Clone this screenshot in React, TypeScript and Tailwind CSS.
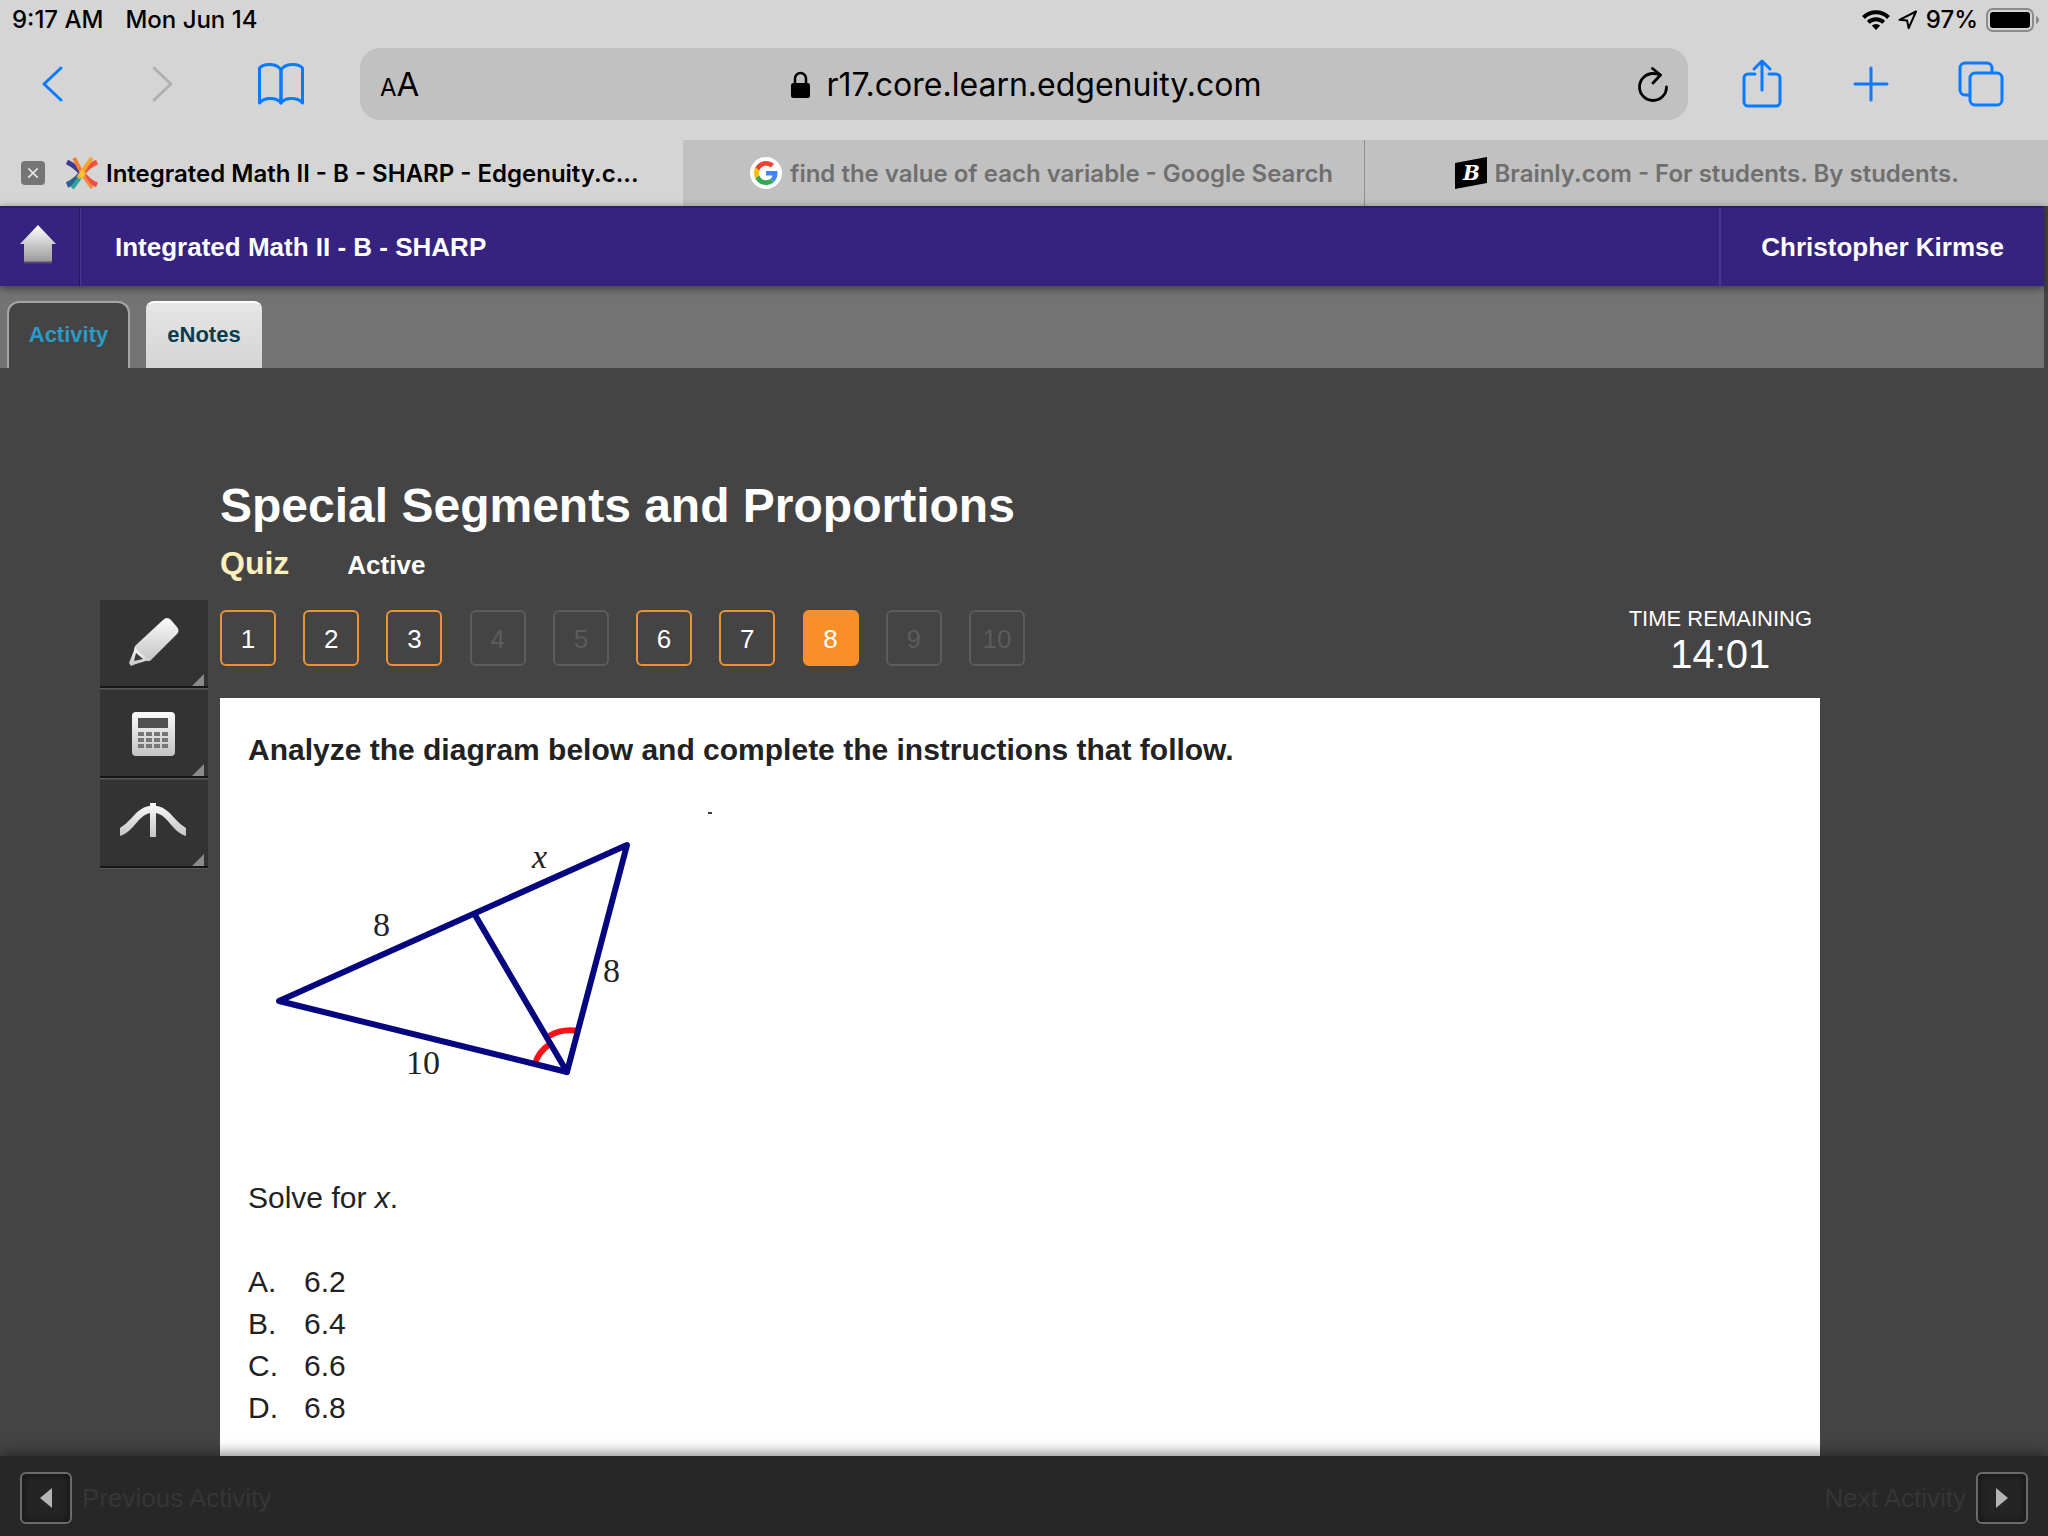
import React from "react";

const tools = ["Highlighter", "Calculator", "Graphing tool"];

const questions = [
  { number: 1, state: "done" },
  { number: 2, state: "done" },
  { number: 3, state: "done" },
  { number: 4, state: "locked" },
  { number: 5, state: "locked" },
  { number: 6, state: "done" },
  { number: 7, state: "done" },
  { number: 8, state: "current" },
  { number: 9, state: "locked" },
  { number: 10, state: "locked" },
];

const options = [
  { letter: "A.", value: "6.2" },
  { letter: "B.", value: "6.4" },
  { letter: "C.", value: "6.6" },
  { letter: "D.", value: "6.8" },
];

const questionStyles: Record<string, string> = {
  done: "border-[#e8923c] text-white",
  locked: "border-[#5c5c5c] text-[#5c5c5c]",
  current: "border-[#f89027] bg-[#f89027] text-white",
};

function StatusBar() {
  return (
    <div className="flex h-10 items-center justify-between pl-3 pr-2 text-[24px] font-medium">
      <div className="flex gap-[22px]">
        <span>9:17 AM</span>
        <span>Mon Jun 14</span>
      </div>
      <div className="flex items-center gap-2">
        <svg width="28" height="20" viewBox="0 0 28 20" fill="none" stroke="black" strokeWidth="4">
          <path d="M1.5 7.5a17.7 17.7 0 0 1 25 0" />
          <path d="M6.3 12.4a11 11 0 0 1 15.4 0" />
          <path d="M14 20l-4.2-4.4a6 6 0 0 1 8.4 0z" fill="black" stroke="none" />
        </svg>
        <svg width="20" height="20" viewBox="0 0 20 20" fill="none" stroke="black" strokeWidth="2" strokeLinejoin="round">
          <path d="M18 1.5L1.5 9.8l7.600.8 1.600 7.600z" />
        </svg>
        <span>97%</span>
        <svg width="54" height="24" viewBox="0 0 54 24">
          <rect x="1" y="1" width="46" height="22" rx="6" fill="none" stroke="#8b8b8b" strokeWidth="2" />
          <rect x="4" y="4" width="40" height="16" rx="3" fill="black" />
          <path d="M50 8c4 1.500 4 6.500 0 8z" fill="#8b8b8b" />
        </svg>
      </div>
    </div>
  );
}

function Toolbar() {
  return (
    <div className="flex h-[100px] items-start pt-2">
      <div className="flex h-[72px] w-[360px] items-center pl-[40px]">
        <button aria-label="Back">
          <svg width="24" height="40" viewBox="0 0 24 40" fill="none" stroke="#0a7aff" strokeWidth="3" strokeLinecap="round" strokeLinejoin="round">
            <path d="M21 4L4 20l17 16" />
          </svg>
        </button>
        <button aria-label="Forward" className="ml-[86px]" disabled>
          <svg width="24" height="40" viewBox="0 0 24 40" fill="none" stroke="#b0b0b0" strokeWidth="3" strokeLinecap="round" strokeLinejoin="round">
            <path d="M4 4l17 16L4 36" />
          </svg>
        </button>
        <button aria-label="Bookmarks" className="ml-[82px]">
          <svg width="50" height="44" viewBox="0 0 50 44" fill="none" stroke="#0a7aff" strokeWidth="3" strokeLinejoin="round">
            <path d="M25 8C21 1 8 1 3.500 6v35C8 35 21 35 25 41z" />
            <path d="M25 8C29 1 42 1 46.500 6v35C42 35 29 35 25 41z" />
          </svg>
        </button>
      </div>
      <div className="flex h-[72px] flex-1 items-center justify-between rounded-[20px] bg-[#c1c1c1] px-5 pt-[2px]">
        <button aria-label="Page settings" className="flex w-12 items-baseline">
          <span className="text-[24px]">A</span>
          <span className="text-[33px]">A</span>
        </button>
        <div className="flex items-center gap-4 pl-[5px]">
          <svg width="19" height="28" viewBox="0 0 19 28">
            <path d="M4 13V7.500a5.500 5.500 0 0 1 11 0V13" fill="none" stroke="black" strokeWidth="2.500" />
            <rect x="0" y="12" width="19" height="15" rx="2.500" fill="black" />
          </svg>
          <input
            aria-label="Address"
            className="field-sizing-content bg-transparent text-[32px] outline-none"
            defaultValue="r17.core.learn.edgenuity.com"
          />
        </div>
        <button aria-label="Reload" className="flex w-12 justify-end">
          <svg width="30" height="36" viewBox="0 0 30 36" fill="none" stroke="black" strokeWidth="2.800" strokeLinecap="round" strokeLinejoin="round">
            <path d="M22 8Q19 6.500 15 6.500A13.500 13.500 0 1 0 28.500 20" />
            <path d="M14.500 1.500l8 6.500-7.500 8" />
          </svg>
        </button>
      </div>
      <div className="flex h-[72px] w-[360px] items-center justify-between pl-[53px] pr-[44px]">
        <button aria-label="Share">
          <svg width="42" height="52" viewBox="0 0 42 52" fill="none" stroke="#0a7aff" strokeWidth="3" strokeLinecap="round" strokeLinejoin="round">
            <path d="M14 16H7a4 4 0 0 0-4 4v24a4 4 0 0 0 4 4h28a4 4 0 0 0 4-4V20a4 4 0 0 0-4-4h-7" />
            <path d="M21 32V3M13 11l8-8 8 8" />
          </svg>
        </button>
        <button aria-label="New tab">
          <svg width="36" height="36" viewBox="0 0 36 36" fill="none" stroke="#0a7aff" strokeWidth="3" strokeLinecap="round">
            <path d="M18 2v32M2 18h32" />
          </svg>
        </button>
        <button aria-label="Show tabs">
          <svg width="46" height="46" viewBox="0 0 46 46" fill="none" stroke="#0a7aff" strokeWidth="3">
            <rect x="12" y="12" width="32" height="32" rx="5" />
            <path d="M12 34H7a5 5 0 0 1-5-5V7a5 5 0 0 1 5-5h22a5 5 0 0 1 5 5v5" />
          </svg>
        </button>
      </div>
    </div>
  );
}

function BrowserTabs() {
  return (
    <nav className="grid h-[66px] grid-cols-3 text-[24px] font-semibold">
      <div className="flex items-center pl-[21px]">
        <button aria-label="Close tab" className="flex size-6 items-center justify-center rounded bg-[#757575]">
          <svg width="12" height="12" viewBox="0 0 14 14" stroke="#e2e2e2" strokeWidth="2">
            <path d="M1.500 1.500l11 11M12.500 1.500l-11 11" />
          </svg>
        </button>
        <a href="#" className="ml-[21px] flex min-w-0 items-center gap-2">
          <svg width="32" height="32" viewBox="0 0 32 32" fill="none" className="shrink-0">
            <path d="M1 5C9 9 13 13 16 17" stroke="#3d3a8c" strokeWidth="5" />
            <path d="M1 28c7-3 11-7 15-12" stroke="#2f5f8f" strokeWidth="6" />
            <path d="M6 31c4-4 7-9 10-14" stroke="#2fa3a0" strokeWidth="4" />
            <path d="M31 5c-7 3-11 7-15 12" stroke="#f0503c" strokeWidth="5" />
            <path d="M31 28c-7-3-11-7-15-12" stroke="#ef4e45" strokeWidth="5" />
            <path d="M26 31c-4-5-7-9-10-15" stroke="#f58a3a" strokeWidth="3" />
            <path d="M8 1c3 5 5 10 8 15" stroke="#f27c3c" strokeWidth="4" />
            <path d="M26 1c-4 5-7 9-10 15l-4 5" stroke="#f5a32f" strokeWidth="4" />
            <path d="M16 12l4 5-5 5-3-4z" fill="#f7c431" />
          </svg>
          <span className="truncate pt-[2px] text-black">Integrated Math II - B - SHARP - Edgenuity.c...</span>
        </a>
      </div>
      <a href="#" className="flex items-center justify-center gap-2 border-r border-[#8e8e8e] bg-[#c1c1c1] pl-9 text-[#6f6f6f]">
        <svg width="32" height="32" viewBox="0 0 32 32" className="shrink-0">
          <circle cx="16" cy="16" r="16" fill="white" />
          <svg x="4" y="4" width="24" height="24" viewBox="0 0 48 48">
            <path fill="#ea4335" d="M24 9.500c3.540 0 6.710 1.220 9.210 3.600l6.850-6.850C35.900 2.380 30.470 0 24 0 14.620 0 6.510 5.380 2.560 13.220l7.980 6.190C12.430 13.720 17.740 9.500 24 9.500z" />
            <path fill="#4285f4" d="M46.980 24.550c0-1.570-.15-3.090-.38-4.550H24v9.020h12.940c-.58 2.960-2.260 5.480-4.780 7.180l7.730 6c4.510-4.180 7.090-10.360 7.090-17.650z" />
            <path fill="#fbbc05" d="M10.530 28.590c-.48-1.450-.76-2.990-.76-4.590s.27-3.140.76-4.590l-7.980-6.190C.92 16.460 0 20.120 0 24s.92 7.540 2.560 10.780l7.970-6.190z" />
            <path fill="#34a853" d="M24 48c6.480 0 11.930-2.130 15.890-5.810l-7.730-6c-2.150 1.450-4.920 2.300-8.160 2.300-6.260 0-11.570-4.220-13.470-9.910l-7.980 6.190C6.510 42.620 14.620 48 24 48z" />
          </svg>
        </svg>
        <span className="truncate pt-[2px]">find the value of each variable - Google Search</span>
      </a>
      <a href="#" className="flex items-center justify-center gap-2 bg-[#c1c1c1] text-[#6f6f6f]">
        <svg width="32" height="32" viewBox="0 0 32 32" className="shrink-0">
          <path d="M0 6L32 0v26L0 32z" fill="black" />
          <text x="8" y="23" fill="white" fontSize="20" fontWeight="bold" fontStyle="italic" fontFamily="DejaVu Serif, serif">B</text>
        </svg>
        <span className="truncate pt-[2px]">Brainly.com - For students. By students.</span>
      </a>
    </nav>
  );
}

function CourseHeader() {
  return (
    <header className="relative z-10 mr-1 flex h-20 items-stretch border-t-2 border-[#2b1d6c] bg-[#35237f] text-[26px] font-bold text-white shadow-[0_2px_8px_rgba(0,0,0,0.5)]">
      <a href="#" aria-label="Home" className="flex w-20 items-center border-r border-[#241758] pb-[2px] pl-5">
        <svg width="37" height="42" viewBox="0 0 37 42">
          <defs>
            <linearGradient id="home" x1="0" y1="0" x2="0" y2="1">
              <stop offset="0" stopColor="#ffffff" />
              <stop offset="1" stopColor="#9a9a9a" />
            </linearGradient>
          </defs>
          <path d="M18 0L36 19h-4v18H4V19H0z" fill="url(#home)" />
          <path d="M4 37.500h28" stroke="#5a4a70" strokeWidth="2" />
        </svg>
      </a>
      <h1 className="flex flex-1 items-center border-l border-[#49389a] pl-[34px]">Integrated Math II - B - SHARP</h1>
      <div className="flex items-center border-l-2 border-[#49389a] pl-[40px] pr-[40px]">Christopher Kirmse</div>
    </header>
  );
}

function ActivityTabs() {
  return (
    <div className="mr-1 flex h-[82px] items-end gap-4 bg-[#737373] pl-[7px] text-[22px] font-bold">
      <button className="h-[67px] w-[123px] rounded-t-xl border-x-2 border-t-2 border-[#a5a5a5] bg-[#444444] pb-[2px] text-[#2b9ac4]">
        Activity
      </button>
      <button className="h-[67px] w-[116px] rounded-t-lg border-t-2 border-white bg-linear-to-b from-[#e6e6e6] to-[#d4d4d4] pb-[2px] text-[#063c4f]">
        eNotes
      </button>
    </div>
  );
}

function ToolIcon({ name }: { name: string }) {
  if (name === "Highlighter") {
    return (
      <svg width="72" height="60" viewBox="0 0 72 60" fill="url(#metal)">
        <path d="M43 7q4-4 8 0l6 7q3 4 0 7L32 46q-3 4-6 1l-11-9q-2-3 1-6z" />
        <path d="M15 35l14 12-13 4-5 2-2-3z" />
        <path d="M16 40l7 6-9 2z" fill="#3a3a3a" />
      </svg>
    );
  }
  if (name === "Calculator") {
    return (
      <svg width="72" height="60" viewBox="0 0 72 60">
        <rect x="12" y="9" width="43" height="44" rx="4" fill="url(#metal)" />
        <rect x="18" y="15" width="30" height="10" fill="#505050" />
        {[29, 35, 41].map((y) =>
          [18, 26, 34, 42].map((x) => (
            <rect key={`${x}-${y}`} x={x} y={y} width="6" height="4" fill="#777777" />
          ))
        )}
      </svg>
    );
  }
  return (
    <svg width="72" height="60" viewBox="0 0 72 60" fill="url(#metal)">
      <path d="M0 35C12 28 17 14 30 13v-3h6v3c13 1 18 15 30 22v8C51 38 49 23 36 20v24h-6V20C17 23 15 38 0 43z" />
    </svg>
  );
}

function ToolMenu() {
  return (
    <aside className="flex w-[108px] shrink-0 flex-col gap-[2px]">
      <svg width="0" height="0" className="absolute">
        <linearGradient id="metal" x1="0" y1="0" x2="0" y2="1">
          <stop offset="0" stopColor="#fafafa" />
          <stop offset="1" stopColor="#c4c4c4" />
        </linearGradient>
      </svg>
      {tools.map((name) => (
        <button
          key={name}
          aria-label={name}
          className="relative flex h-[88px] items-center justify-center border-b-2 border-[#161616] bg-[#333333] pl-1 shadow-[0_1px_0_#5a5a5a]"
        >
          <ToolIcon name={name} />
          <svg width="12" height="12" viewBox="0 0 12 12" className="absolute bottom-0 right-1">
            <path d="M12 0v12H0z" fill="#8a8a8a" />
          </svg>
        </button>
      ))}
    </aside>
  );
}

function Diagram() {
  return (
    <svg width="480" height="320" viewBox="0 0 480 320" className="mt-[30px] font-['Liberation_Serif',serif] text-[34px]">
      <g fill="none" stroke="#fb1018" strokeWidth="6">
        <path d="M301 236Q314 228 331 231" />
        <path d="M302 244Q290 252 287 264" />
      </g>
      <g fill="none" stroke="#06067f" strokeWidth="6" strokeLinejoin="round" strokeLinecap="round">
        <path d="M31 201L379 45 319 272z" />
        <path d="M227 115L319 272" />
      </g>
      <g fill="#222222">
        <text x="284" y="68" fontStyle="italic">x</text>
        <text x="125" y="136">8</text>
        <text x="355" y="182">8</text>
        <text x="158" y="274">10</text>
        <rect x="460" y="12" width="4" height="2" fill="#4a3540" />
      </g>
    </svg>
  );
}

function Question() {
  return (
    <section className="mt-8 flex-1 bg-white px-7 pb-6 pt-8 text-[30px] text-[#222222]">
      <h3 className="font-bold leading-10">
        Analyze the diagram below and complete the instructions that follow.
      </h3>
      <Diagram />
      <p className="mt-[57px] leading-[42px]">
        Solve for <i>x</i>.
      </p>
      <ol className="mt-[42px] leading-[42px]">
        {options.map((option) => (
          <li key={option.letter} className="flex">
            <span className="w-14">{option.letter}</span>
            <span>{option.value}</span>
          </li>
        ))}
      </ol>
    </section>
  );
}

function Footer() {
  return (
    <footer className="sticky bottom-0 flex h-20 items-center justify-between bg-[#272727] px-5 pt-1 text-[26px] text-[#363636] shadow-[0_-2px_14px_rgba(0,0,0,0.5)]">
      <button className="flex items-center gap-[10px]">
        <span className="flex size-[52px] items-center justify-center rounded-md border-2 border-[#6a6a6a] bg-[#242424] shadow-[inset_0_0_8px_rgba(0,0,0,0.6)]">
          <svg width="12" height="20" viewBox="0 0 12 20">
            <path d="M12 0v20L0 10z" fill="#b4b4b4" />
          </svg>
        </span>
        Previous Activity
      </button>
      <button className="flex items-center gap-[10px]">
        Next Activity
        <span className="flex size-[52px] items-center justify-center rounded-md border-2 border-[#6a6a6a] bg-[#242424] shadow-[inset_0_0_8px_rgba(0,0,0,0.6)]">
          <svg width="12" height="20" viewBox="0 0 12 20">
            <path d="M0 0v20l12-10z" fill="#b4b4b4" />
          </svg>
        </span>
      </button>
    </footer>
  );
}

export default function App() {
  return (
    <div className="flex min-h-screen flex-col bg-[#444444] font-['Liberation_Sans',Arial,sans-serif]">
      <div className="bg-[#d5d5d5] font-[Inter,sans-serif] text-black">
        <StatusBar />
        <Toolbar />
        <BrowserTabs />
      </div>
      <CourseHeader />
      <ActivityTabs />
      <main className="flex flex-1 flex-col pt-[110px]">
        <div className="pl-[220px]">
          <h2 className="text-[48px] font-bold leading-[56px] text-white">Special Segments and Proportions</h2>
          <div className="mt-[9px] flex items-baseline gap-[58px] font-bold">
            <span className="text-[32px] leading-10 text-[#fdf0bd]">Quiz</span>
            <span className="text-[26px] text-white">Active</span>
          </div>
        </div>
        <div className="mt-[15px] flex flex-1 gap-3 pl-[100px] pr-[228px]">
          <ToolMenu />
          <div className="flex flex-1 flex-col pt-[10px]">
            <div className="flex h-14 justify-between pr-2">
              <div className="flex w-[805px] justify-between">
                {questions.map((question) => (
                  <button
                    key={question.number}
                    disabled={question.state === "locked"}
                    className={`size-14 rounded-md border-2 pt-[2px] text-[26px] ${questionStyles[question.state]}`}
                  >
                    {question.number}
                  </button>
                ))}
              </div>
              <div className="text-center text-white">
                <p className="text-[22px] leading-[18px]">TIME REMAINING</p>
                <p className="mt-[6px] text-[40px] leading-10">14:01</p>
              </div>
            </div>
            <Question />
          </div>
        </div>
      </main>
      <Footer />
    </div>
  );
}
